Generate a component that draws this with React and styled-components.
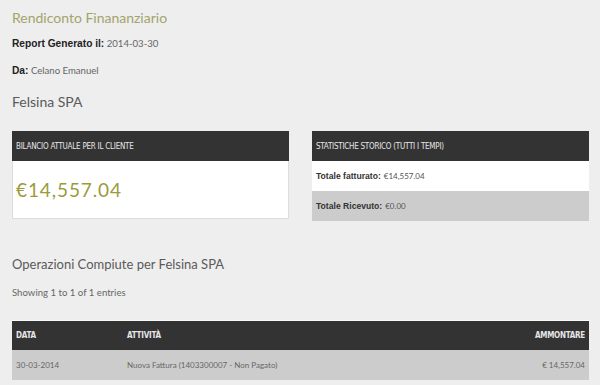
import React from 'react'
import styled, { createGlobalStyle } from 'styled-components'

const GlobalStyle = createGlobalStyle`
body {
  margin: 0;
  background: #eeeeee;
  font-family: Lato, "Open Sans", sans-serif;
  color: #555;
}
`

const Page = styled.div`
padding: 8px 11px 0 12px;
`

const Title = styled.h1`
margin: 0;
font-size: 14px;
line-height: 20px;
font-weight: 400;
color: #a3a36c;
`

const Meta = styled.p`
margin: ${p => p.$top}px 0 0;
font-size: 9.6px;
line-height: 14px;
color: #666;
b {
  font-family: "Liberation Sans", Arial, sans-serif;
  font-size: 10.2px;
  color: #222;
}
`

const Heading = styled.h2`
margin: ${p => p.$top}px 0 0;
font-size: ${p => p.$size || 14}px;
line-height: 20px;
font-weight: 400;
color: #5a5a5a;
`

const Columns = styled.div`
display: grid;
grid-template-columns: 277px 277px;
column-gap: 23px;
margin-top: 19px;
align-items: start;
`

const Panel = styled.div`
display: flex;
flex-direction: column;
`

const PanelHead = styled.div`
height: 30px;
background: #333333;
color: #e6e6e6;
display: flex;
align-items: center;
padding: 0 4px;
font-family: "DejaVu Sans Condensed", sans-serif;
font-size: 8px;
letter-spacing: -0.25px;
text-transform: uppercase;
`

const PanelBody = styled.div`
height: 57px;
background: #fff;
border: 1px solid #dddddd;
border-top: none;
display: flex;
align-items: center;
padding: 0 3px;
`

const Amount = styled.span`
font-size: 19px;
letter-spacing: 0.9px;
color: #9b9b3c;
`

const StatRow = styled.div`
height: 30px;
background: ${p => (p.$alt ? '#cccccc' : '#ffffff')};
display: flex;
align-items: center;
padding: 0 4px;
font-size: 8px;
color: #555;
b {
  font-family: "Liberation Sans", Arial, sans-serif;
  font-size: 8.6px;
  color: #333;
  margin-right: 3px;
}
`

const Table = styled.table`
margin-top: 20px;
width: 577px;
border-collapse: collapse;
border-top: 1px solid #fafafa;
`

const Th = styled.th`
height: 29px;
background: #333333;
color: #e6e6e6;
padding: 0 4px;
text-align: ${p => p.$align || 'left'};
font-family: "DejaVu Sans Condensed", sans-serif;
font-size: 8px;
letter-spacing: -0.25px;
font-weight: 700;
text-transform: uppercase;
width: ${p => p.$w || 'auto'};
`

const Td = styled.td`
height: 30px;
background: #cccccc;
padding: 0 4px;
text-align: ${p => p.$align || 'left'};
font-size: 8px;
color: #666;
`

export default function App() {
  return (
    <>
      <GlobalStyle />
      <Page>
        <Title>Rendiconto Finananziario</Title>
        <Meta $top={9}><b>Report Generato il:</b> 2014-03-30</Meta>
        <Meta $top={13}><b>Da:</b> Celano Emanuel</Meta>
        <Heading $top={14}>Felsina SPA</Heading>

        <Columns>
          <Panel>
            <PanelHead>Bilancio attuale per il cliente</PanelHead>
            <PanelBody>
              <Amount>€14,557.04</Amount>
            </PanelBody>
          </Panel>
          <Panel>
            <PanelHead>Statistiche storico (tutti i tempi)</PanelHead>
            <StatRow><b>Totale fatturato:</b> €14,557.04</StatRow>
            <StatRow $alt><b>Totale Ricevuto:</b> €0.00</StatRow>
          </Panel>
        </Columns>

        <Heading $top={33} $size={13}>Operazioni Compiute per Felsina SPA</Heading>
        <Meta $top={12}>Showing 1 to 1 of 1 entries</Meta>

        <Table>
          <thead>
            <tr>
              <Th $w="103px">Data</Th>
              <Th>Attività</Th>
              <Th $align="right">Ammontare</Th>
            </tr>
          </thead>
          <tbody>
            <tr>
              <Td>30-03-2014</Td>
              <Td>Nuova Fattura (1403300007 - Non Pagato)</Td>
              <Td $align="right">€ 14,557.04</Td>
            </tr>
          </tbody>
        </Table>
      </Page>
    </>
  )
}
